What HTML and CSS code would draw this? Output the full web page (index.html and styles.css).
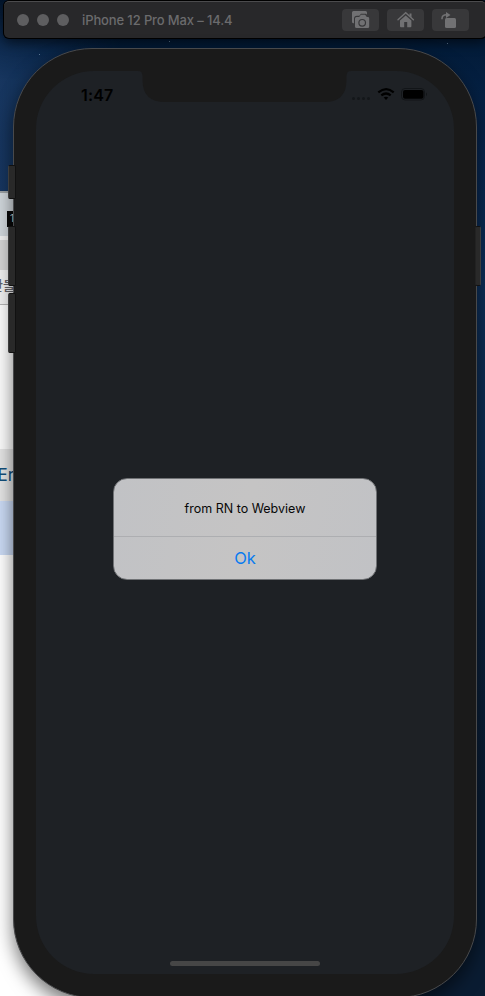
FILE: index.html
```html
<!DOCTYPE html>
<html lang="en">
<head>
<meta charset="utf-8">
<title>iPhone 12 Pro Max – 14.4</title>
<link rel="stylesheet" href="styles.css">
</head>
<body>
<main class="desktop">
  <i class="star star-a"></i><i class="star star-b"></i><i class="star star-c"></i>
  <section class="back-window">
    <div class="back-tabs"></div>
    <div class="back-tools"></div>
    <div class="back-bookmarks">만들</div>
    <div class="back-page"></div>
    <div class="back-row">Er</div>
    <div class="back-selected"></div>
    <span class="back-badge">1</span>
  </section>

  <header class="titlebar">
    <div class="lights"><i></i><i></i><i></i></div>
    <div class="title">iPhone 12 Pro Max – 14.4</div>
    <div class="tools">
      <button class="tool" aria-label="Screenshot">
        <svg width="37" height="22" viewBox="0 0 37 22">
          <path fill="#717173" d="M11.500 2h12q1.500 0 1.500 1.500v2.200l-1-1h-5l-1.700 2H15q-3 0-3 3v4.500h-.5q-1.500 0-1.500-1.500V3.500Q10 2 11.500 2z"/>
          <path fill="#717173" d="M14.500 8h2.700l1.700-2.200h4.200L24.800 8h1q1.400 0 1.400 1.400v8.100q0 1.500-1.500 1.500H14.500q-1.500 0-1.500-1.500v-8Q13 8 14.500 8z"/>
          <circle cx="20.200" cy="13.800" r="3.300" fill="none" stroke="#38383a" stroke-width="1.200"/>
        </svg>
      </button>
      <button class="tool" aria-label="Home">
        <svg width="37" height="22" viewBox="0 0 37 22">
          <path fill="none" stroke="#717173" stroke-width="1.400" stroke-linecap="round" d="M11 10.800l7.700-7 7.700 7"/>
          <path fill="#717173" d="M22.500 4.500h2v4.200l-2-2zM13 11.600l5.700-5.200 5.700 5.200v5.700q0 1-1 1h-3.200v-5.200h-3v5.200H14q-1 0-1-1z"/>
        </svg>
      </button>
      <button class="tool" aria-label="Rotate">
        <svg width="37" height="22" viewBox="0 0 37 22">
          <rect x="13" y="9" width="11" height="10" rx="1.500" fill="#717173"/>
          <path fill="none" stroke="#717173" stroke-width="1.500" d="M10 10.300V9.500q0-3.500 4.500-3.700"/>
          <path fill="#717173" d="M14 3l4.500 3-4.500 3z"/>
        </svg>
      </button>
    </div>
  </header>

  <section class="phone">
    <i class="key key-mute"></i><i class="key key-up"></i><i class="key key-down"></i><i class="key key-power"></i>
    <div class="screen">
      <div class="statusbar">
        <time>1:47</time>
        <svg class="status-icons" width="80" height="20" viewBox="0 0 80 20">
          <g fill="#14171a"><circle cx="5.500" cy="14.500" r="1.500"/><circle cx="10.500" cy="14.500" r="1.500"/><circle cx="15.500" cy="14.500" r="1.500"/><circle cx="20.500" cy="14.500" r="1.500"/></g>
          <g fill="none" stroke="#000" stroke-width="2.200"><path d="M30.300 8.400q8-6.500 15.400 0"/><path d="M33.300 11.400q4.800-3.800 9.400 0"/></g>
          <path d="M35.700 13.600q2.300-1.800 4.600 0L38 16z"/>
          <rect x="53.500" y="4.500" width="23" height="11.500" rx="3.500" fill="none" stroke="#121518"/>
          <rect x="55" y="6" width="20.500" height="8.800" rx="2"/>
          <path d="M78 8.500q2 1.700 0 3.700z" fill="#121518"/>
        </svg>
      </div>
      <div class="alert">
        <div class="message">from RN to Webview</div>
        <button class="ok">Ok</button>
      </div>
      <div class="home-bar"></div>
    </div>
    <svg class="notch" width="219" height="33" viewBox="0 0 219 33">
      <path fill="#1a1a1a" d="M0 0h219v1h-3q-4.500 0-4.500 5v4q0 22-22 22H30Q7.500 32 7.500 10V6Q7.500 1 3 1H0z"/>
    </svg>
  </section>
</main>
</body>
</html>
```
FILE: styles.css
```css
* { box-sizing: border-box; }
body { margin: 0; font-family: Inter, "Liberation Sans", sans-serif; }
.desktop {
  position: relative;
  width: 485px;
  height: 996px;
  overflow: hidden;
  background: linear-gradient(180deg, #04152b 0, #031c3a 50px, #07254d 150px, #0d2e57 290px, #0d2b4e 450px, #0c2039 620px, #0a1c32 800px, #0a1c32 996px);
}
.desktop::before {
  content: "";
  position: absolute;
  inset: 0 auto auto 0;
  width: 120px;
  height: 200px;
  background: linear-gradient(90deg, #17365f, transparent);
  mask-image: linear-gradient(transparent, #000 80px);
}
.star { position: absolute; width: 1px; height: 1px; background: #5d7895; }
.star-a { left: 39px; top: 54px; }
.star-b { left: 169px; top: 41px; }
.star-c { left: 447px; top: 43px; }

.back-window {
  position: absolute;
  left: 0;
  top: 191px;
  width: 100px;
  height: 805px;
  display: flex;
  flex-direction: column;
  background: #fff;
  border-top: 2px solid #9ba0a3;
}
.back-tabs { height: 43px; background: #d0d6db; }
.back-tools { height: 34px; background: #d4d4d4; border-top: 4px solid #f0f0f0; }
.back-bookmarks {
  height: 35px;
  padding-top: 7px;
  background: #f0f0f0;
  border-bottom: 1px solid #b4b4b4;
  color: #626266;
  font: 500 13px/16px "Noto Sans CJK KR", sans-serif;
  text-indent: -9px;
}
.back-page { height: 144px; background: #fbfbfb; }
.back-row {
  height: 52px;
  background: #e4e4e4;
  color: #124f7b;
  font-size: 17px;
  line-height: 52px;
  text-indent: -2.5px;
}
.back-selected { height: 54px; background: #cadaf4; }
.back-badge {
  position: absolute;
  left: 7px;
  top: 18px;
  width: 12px;
  height: 16px;
  background: #080808;
  color: #ddd;
  font-size: 10px;
  line-height: 14px;
  padding-left: 3px;
}

.titlebar {
  position: absolute;
  left: 4px;
  top: 1px;
  width: 482px;
  height: 37px;
  display: flex;
  align-items: center;
  padding: 0 17px 0 13px;
  border-radius: 5px;
  background: #28282a;
  border-top: 1px solid #4b4b4d;
  box-shadow: 0 0 0 1px #000, 0 5px 12px #0008;
}
.lights { display: flex; gap: 8px; }
.lights i { width: 12px; height: 12px; border-radius: 50%; background: #5e5e60; }
.title {
  margin-left: 13px;
  color: #6b6b6d;
  font-size: 13px;
  font-weight: 500;
  letter-spacing: -0.12px;
  white-space: nowrap;
}
.tools { display: flex; gap: 8px; margin-left: auto; }
.tool { width: 37px; height: 22px; padding: 0; border: 0; border-radius: 4px; background: #38383a; }
.tool svg { display: block; }

.phone {
  position: absolute;
  left: 13px;
  top: 48px;
  width: 464px;
  height: 950px;
  padding: 22px;
  border: 1px solid #48494b;
  border-radius: 79px;
  background: #1a1a1a;
  box-shadow: 0 8px 18px #0008;
}
.screen {
  width: 418px;
  height: 903px;
  display: flex;
  flex-direction: column;
  align-items: center;
  border-radius: 58px;
  background: #1e2125;
}
.notch { position: absolute; left: 121px; top: 21px; }
.statusbar { width: 100%; height: 407px; display: flex; justify-content: space-between; padding: 13px 26px 0 45px; }
.statusbar time { font-size: 16px; line-height: 22px; font-weight: 600; letter-spacing: 0.2px; color: #000; }
.alert {
  width: 264px;
  height: 102px;
  display: flex;
  flex-direction: column;
  border: 1px solid #707275;
  border-radius: 14px;
  overflow: hidden;
  background: linear-gradient(100deg, #c1c2c5, #c5c4c4 50%, #c1c2c5);
}
.message { height: 58px; padding-top: 1px; border-bottom: 1px solid #adaeb1; color: #080808; font-size: 12.5px; line-height: 58px; text-align: center; }
.ok { height: 42px; padding: 1px 0 0; border: 0; background: none; color: #087bf0; font: 16.5px/41px Inter, sans-serif; }
.home-bar { width: 150px; height: 5px; margin-top: 381px; border-radius: 3px; background: #464646; }

.key { position: absolute; width: 8px; background: #292929; border: 1px solid #111; border-left-color: #3d3d3d; border-radius: 2px; }
.key-mute { left: -6px; top: 116px; height: 34px; }
.key-up { left: -6px; top: 177px; height: 60px; }
.key-down { left: -6px; top: 244px; height: 60px; }
.key-power { left: 461px; top: 177px; width: 6px; height: 60px; border-left-color: #222; border-right-color: #3d3d3d; }
```
